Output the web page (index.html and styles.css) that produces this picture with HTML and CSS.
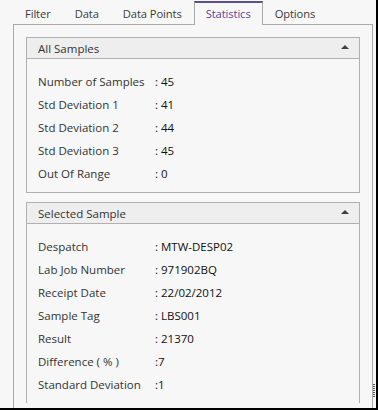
FILE: index.html
```html
<!DOCTYPE html>
<html lang="en">

<head>
    <meta charset="UTF-8">
    <title>Statistics</title>
    <link rel="stylesheet" href="styles.css">
</head>

<body>

    <div class="vindue">

        <div class="faner">
            <div class="fane">Filter</div>
            <div class="fane">Data</div>
            <div class="fane">Data Points</div>
            <div class="fane valgt">Statistics</div>
            <div class="fane">Options</div>
        </div>

        <div class="panel">

            <div class="gruppe">
                <div class="hoved">
                    <span>All Samples</span>
                    <span class="pil"></span>
                </div>
                <div class="raekker">
                    <div class="raekke"><span class="navn">Number of Samples</span><span class="vaerdi">: 45</span></div>
                    <div class="raekke"><span class="navn">Std Deviation 1</span><span class="vaerdi">: 41</span></div>
                    <div class="raekke"><span class="navn">Std Deviation 2</span><span class="vaerdi">: 44</span></div>
                    <div class="raekke"><span class="navn">Std Deviation 3</span><span class="vaerdi">: 45</span></div>
                    <div class="raekke"><span class="navn">Out Of Range</span><span class="vaerdi">: 0</span></div>
                </div>
            </div>

            <div class="gruppe aaben">
                <div class="hoved">
                    <span>Selected Sample</span>
                    <span class="pil"></span>
                </div>
                <div class="raekker">
                    <div class="raekke"><span class="navn">Despatch</span><span class="vaerdi">: MTW-DESP02</span></div>
                    <div class="raekke"><span class="navn">Lab Job Number</span><span class="vaerdi">: 971902BQ</span></div>
                    <div class="raekke"><span class="navn">Receipt Date</span><span class="vaerdi">: 22/02/2012</span></div>
                    <div class="raekke"><span class="navn">Sample Tag</span><span class="vaerdi">: LBS001</span></div>
                    <div class="raekke"><span class="navn">Result</span><span class="vaerdi">: 21370</span></div>
                    <div class="raekke"><span class="navn">Difference ( % )</span><span class="vaerdi">:7</span></div>
                    <div class="raekke"><span class="navn">Standard Deviation</span><span class="vaerdi">:1</span></div>
                </div>
            </div>

        </div>

        <div class="greb"></div>
    </div>

</body>

</html>
```

FILE: styles.css
```css
* {
    box-sizing: border-box;
}

body {
    margin: 0;
    background-color: #f7f7f7;
    font-family: "Open Sans", "Noto Sans", sans-serif;
    font-size: 11.5px;
    color: #333;
}

.vindue {
    position: relative;
    width: 378px;
    height: 410px;
    overflow: hidden;
    border-right: 2px solid #000;
    border-bottom: 2px solid #000;
}

.faner {
    display: flex;
    padding-left: 13px;
    padding-top: 1px;
    height: 24px;
}

.fane {
    padding: 0 12px;
    line-height: 22px;
    height: 23px;
    border-top: 2px solid transparent;
    color: #3a3a3a;
    font-size: 11.2px;
    letter-spacing: -0.1px;
}

.fane.valgt {
    position: relative;
    z-index: 1;
    height: 24px;
    border-top: 2px solid #5a4f8f;
    border-left: 1px solid #aaa;
    border-right: 1px solid #aaa;
    background-color: #f7f7f7;
    color: #55489a;
    padding: 0 11px;
}

.panel {
    margin-left: 13px;
    width: 360px;
    height: 400px;
    border: 1px solid #aaa;
    padding: 12px 12px 0 12px;
}

.gruppe {
    border: 1px solid #b0b0b0;
    margin-bottom: 9px;
}

.gruppe.aaben {
    border-bottom: none;
}

.hoved {
    display: flex;
    justify-content: space-between;
    align-items: center;
    height: 21px;
    padding: 0 10px 0 11px;
    background-color: #eeeeee;
    border-bottom: 1px solid #b0b0b0;
    color: #333;
}

.pil {
    width: 0;
    height: 0;
    border-left: 4px solid transparent;
    border-right: 4px solid transparent;
    border-bottom: 4px solid #404040;
    margin-top: -2px;
}

.raekker {
    padding: 11px 0 7px 11px;
}

.raekke {
    display: flex;
    height: 23px;
    line-height: 23px;
}

.navn {
    width: 117px;
}

.vaerdi {
    color: #111;
}

.greb {
    position: absolute;
    right: 1px;
    bottom: 10px;
    width: 2px;
    height: 14px;
    background: repeating-linear-gradient(#555 0 1px, transparent 1px 2px);
}
```
